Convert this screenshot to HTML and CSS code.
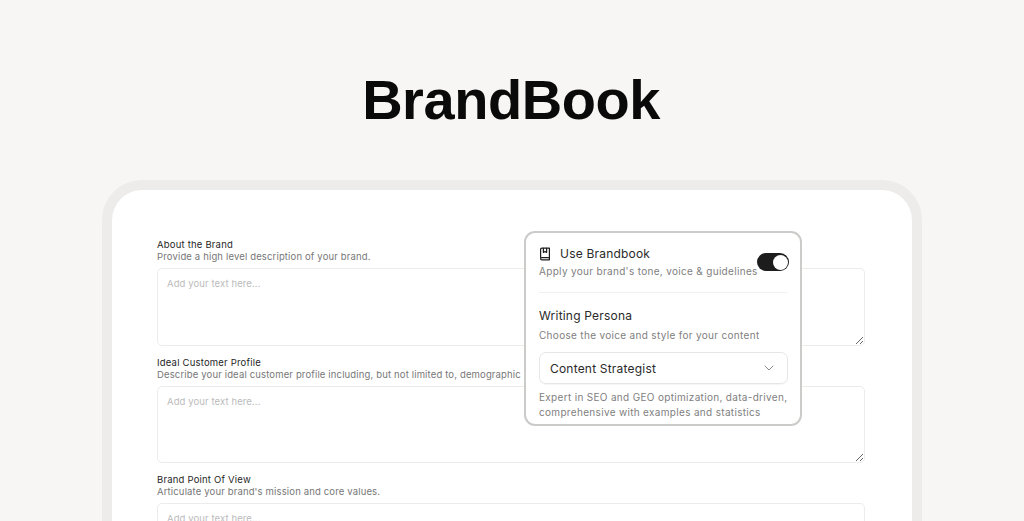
FILE: index.html
```html
<!DOCTYPE html>
<html lang="en">
<head>
    <meta charset="UTF-8">
    <meta name="viewport" content="width=device-width, initial-scale=1.0">
    <title>BrandBook</title>
    <link rel="stylesheet" href="styles.css">
</head>
<body>
<div class="page">
    <h1 class="title">BrandBook</h1>
    <div class="frame">
        <form class="form">
            <div class="field">
                <label class="field-label" for="about">About the Brand</label>
                <p class="field-hint">Provide a high level description of your brand.</p>
                <textarea id="about" class="field-input" placeholder="Add your text here..."></textarea>
            </div>
            <div class="field">
                <label class="field-label" for="icp">Ideal Customer Profile</label>
                <p class="field-hint">Describe your ideal customer profile including, but not limited to, demographic</p>
                <textarea id="icp" class="field-input" placeholder="Add your text here..."></textarea>
            </div>
            <div class="field">
                <label class="field-label" for="pov">Brand Point Of View</label>
                <p class="field-hint">Articulate your brand's mission and core values.</p>
                <textarea id="pov" class="field-input" placeholder="Add your text here..."></textarea>
            </div>
        </form>

        <div class="popover">
            <div class="toggle-row">
                <div class="toggle-text">
                    <div class="toggle-title">
                        <svg class="book-icon" viewBox="0 0 14 14" width="14" height="14" fill="none" stroke="#1d1d1d" stroke-width="1.2" stroke-linejoin="round" stroke-linecap="round">
                            <path d="M2.6 10.6V2.4c0-.7.5-1.2 1.2-1.2h7.6v11.6H3.8c-.7 0-1.2-.5-1.2-1.1s.5-1.1 1.2-1.1h7.6"/>
                            <path d="M5.4 1.4v4l1.6-1 1.6 1v-4"/>
                        </svg>
                        <span>Use Brandbook</span>
                    </div>
                    <p class="popover-hint">Apply your brand's tone, voice &amp; guidelines</p>
                </div>
                <span class="switch"><span class="switch-knob"></span></span>
            </div>
            <div class="divider"></div>
            <div class="persona-title">Writing Persona</div>
            <p class="popover-hint persona-hint">Choose the voice and style for your content</p>
            <div class="select">
                <span>Content Strategist</span>
                <svg viewBox="0 0 10 6" width="10" height="6" fill="none" stroke="#8a8a8a" stroke-width="1" stroke-linecap="round" stroke-linejoin="round">
                    <path d="M1 1l4 4 4-4"/>
                </svg>
            </div>
            <p class="popover-hint persona-desc">Expert in SEO and GEO optimization, data-driven, comprehensive with examples and statistics</p>
        </div>
    </div>
</div>
</body>
</html>
```

FILE: styles.css
```css
* {
    box-sizing: border-box;
}

html,
body {
    height: 100%;
    margin: 0;
    padding: 0;
    overflow: hidden;
}

body {
    font-family: Inter, 'Liberation Sans', Arial, sans-serif;
    background-color: #f7f6f4;
    color: #1d1d1d;
}

.page {
    height: 521px;
    overflow: hidden;
}

.title {
    margin: 0;
    padding: 68px 2px 0 0;
    height: 180px;
    font-family: 'Liberation Sans', Arial, sans-serif;
    font-size: 56px;
    line-height: 64px;
    font-weight: 700;
    letter-spacing: -0.45px;
    text-align: center;
    color: #0a0a0a;
}

.frame {
    position: relative;
    width: 820px;
    height: 500px;
    margin: 0 auto;
    padding: 49px 47px 0 45px;
    background-color: #fff;
    border: 10px solid #edecea;
    border-radius: 40px;
    background-clip: padding-box;
}

.form {
    display: flex;
    flex-direction: column;
    gap: 11px;
}

.field {
    display: flex;
    flex-direction: column;
}

.field-label {
    font-size: 9.5px;
    line-height: 12px;
    font-weight: 400;
    letter-spacing: 0.2px;
    color: #1f1f1f;
}

.field-hint {
    margin: 0 0 5px;
    height: 12px;
    font-size: 9.5px;
    line-height: 12px;
    color: #777;
    white-space: nowrap;
    letter-spacing: 0.15px;
}

.field-input {
    display: block;
    width: 100%;
    height: 77.5px;
    padding: 8px 9px;
    font-family: inherit;
    font-size: 9.5px;
    line-height: 14px;
    letter-spacing: 0.1px;
    background-color: #fff;
    border: 1px solid #ececea;
    border-radius: 5px;
    outline: none;
    resize: vertical;
}

.field-input::placeholder {
    color: #bbb;
}

.popover {
    position: absolute;
    left: 412px;
    top: 41px;
    width: 278px;
    height: 195px;
    padding: 13px 12px 0 13px;
    background-color: #fff;
    border: 2px solid #cbcbc9;
    border-radius: 11px;
    overflow: hidden;
}

.toggle-row {
    display: flex;
    justify-content: space-between;
    align-items: center;
}

.toggle-text {
    flex: none;
    width: 218px;
}

.toggle-title {
    display: flex;
    align-items: center;
    gap: 7px;
    font-size: 12px;
    line-height: 16px;
    letter-spacing: 0.2px;
    color: #2a2a2a;
}

.book-icon {
    flex: none;
    margin-left: -1px;
    margin-right: 1px;
}

.popover-hint {
    margin: 0;
    font-size: 10px;
    line-height: 14px;
    letter-spacing: 0.32px;
    color: #808080;
    white-space: nowrap;
}

.toggle-text .popover-hint {
    margin-top: 2px;
}

.switch {
    display: flex;
    justify-content: flex-end;
    align-items: center;
    flex: none;
    width: 32px;
    height: 18px;
    padding: 0 1px;
    background-color: #1c1c1c;
    border-radius: 9px;
}

.switch-knob {
    width: 15px;
    height: 15px;
    background-color: #fff;
    border-radius: 50%;
}

.divider {
    height: 1px;
    margin: 14px 0 15px;
    background-color: #f1f1ef;
}

.persona-title {
    font-size: 12px;
    line-height: 16px;
    letter-spacing: 0.2px;
    color: #2a2a2a;
}

.persona-hint {
    margin-top: 4px;
}

.select {
    display: flex;
    justify-content: space-between;
    align-items: center;
    height: 32px;
    margin-top: 10px;
    padding: 0 13px 0 10px;
    font-size: 12px;
    letter-spacing: 0.2px;
    color: #2a2a2a;
    border: 1px solid #e6e6e4;
    border-radius: 7px;
    box-shadow: 0 1px 1px rgba(0, 0, 0, 0.04);
}

.persona-desc {
    margin-top: 6px;
    line-height: 15px;
    white-space: normal;
}
```
